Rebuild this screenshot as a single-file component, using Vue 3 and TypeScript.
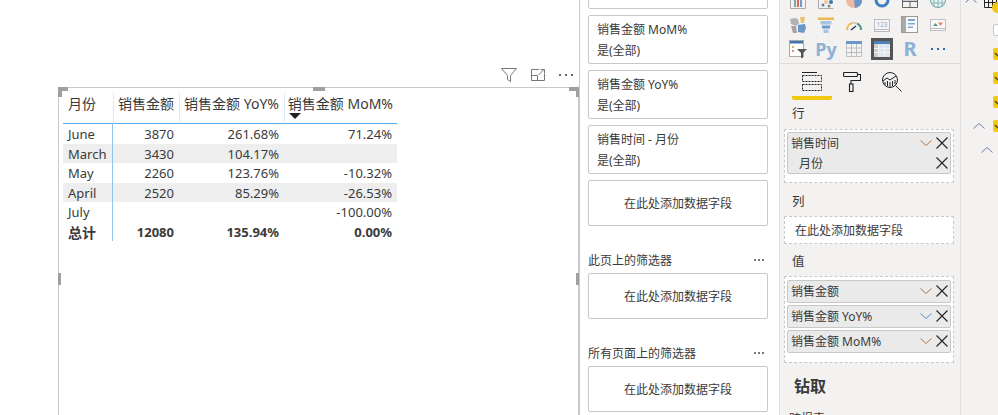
<script setup lang="ts">
interface Row { name: string; amount: string; yoy: string; mom: string; striped: boolean }
const rows: Row[] = [
  { name: 'June', amount: '3870', yoy: '261.68%', mom: '71.24%', striped: false },
  { name: 'March', amount: '3430', yoy: '104.17%', mom: '', striped: true },
  { name: 'May', amount: '2260', yoy: '123.76%', mom: '-10.32%', striped: false },
  { name: 'April', amount: '2520', yoy: '85.29%', mom: '-26.53%', striped: true },
  { name: 'July', amount: '', yoy: '', mom: '-100.00%', striped: false }
]
const filters = ['销售金额 MoM%', '销售金额 YoY%', '销售时间 - 月份']
const values = ['销售金额', '销售金额 YoY%', '销售金额 MoM%']
const checks = [0, 1, 2, 3]
</script>

<template>
  <div class="app">
    <section class="canvas">
      <div class="toolbar">
        <svg width="16" height="14" viewBox="0 0 16 14" fill="none" stroke="#7b7480"><path d="M.5.500h15L9.500 7.500v6l-3-2v-4z" /></svg>
        <svg width="14" height="12" viewBox="0 0 14 12" fill="none" stroke="#7b7480"><path d="M8 .5H.5v11h13V5M.5 6.500h6v5M7.500 6l5.500-5.500M9.500.500h4v4" /></svg>
        <span class="dots dark"><i></i><i></i><i></i></span>
      </div>
      <div class="visual">
        <span class="handle tl"></span>
        <span class="handle tm"></span>
        <span class="handle tr"></span>
        <span class="handle ml"></span>
        <span class="handle mr"></span>
        <div class="table">
          <div class="cell head left">月份</div>
          <div class="cell head">销售金额</div>
          <div class="cell head">销售金额 YoY%</div>
          <div class="cell head sorted">销售金额 MoM%<span class="arrow"></span></div>
          <template v-for="r in rows" :key="r.name">
            <div class="cell first" :class="{ striped: r.striped }">{{ r.name }}</div>
            <div class="cell num" :class="{ striped: r.striped }">{{ r.amount }}</div>
            <div class="cell num" :class="{ striped: r.striped }">{{ r.yoy }}</div>
            <div class="cell num" :class="{ striped: r.striped }">{{ r.mom }}</div>
          </template>
          <div class="cell first total label">总计</div>
          <div class="cell num total">12080</div>
          <div class="cell num total">135.94%</div>
          <div class="cell num total">0.00%</div>
        </div>
      </div>
    </section>

    <section class="filters">
      <div class="card cut"></div>
      <div v-for="f in filters" :key="f" class="card filter">
        <div>{{ f }}</div>
        <div>是(全部)</div>
      </div>
      <div class="card add tall">在此处添加数据字段</div>
      <div class="group-head"><span>此页上的筛选器</span><span class="dots small"><i></i><i></i><i></i></span></div>
      <div class="card add">在此处添加数据字段</div>
      <div class="group-head"><span>所有页面上的筛选器</span><span class="dots small"><i></i><i></i><i></i></span></div>
      <div class="card add">在此处添加数据字段</div>
    </section>

    <section class="viz">
      <div class="gallery">
        <svg viewBox="0 0 18 18" class="ico"><path d="M1.500 0v17.500h15V0" fill="none" stroke="#aaa" /><path d="M5 16V9h2v7z" fill="#7fa9a0" /><path d="M8 16V5h2v11z" fill="#d9695a" /><path d="M11 16V8h2v8z" fill="#6a9bd1" /></svg>
        <svg viewBox="0 0 18 18" class="ico"><path d="M1.500 0v17.500h15" fill="none" stroke="#aaa" /><circle cx="6" cy="14" r="1.500" fill="#4f7fb5" /><circle cx="9" cy="11" r="2" fill="#e8c88d" /><circle cx="14" cy="11" r="2" fill="#3f74ad" /><circle cx="12" cy="15" r="1.500" fill="#888" /></svg>
        <svg viewBox="0 0 18 18" class="ico"><circle cx="9" cy="9" r="8" fill="#eeb8a2" /><path d="M16 5a8 8 0 0 1-6 12l-1-8z" fill="#6a96c8" /></svg>
        <svg viewBox="0 0 18 18" class="ico"><circle cx="9" cy="9" r="6" fill="none" stroke="#3f7fbf" stroke-width="3" /></svg>
        <svg viewBox="0 0 18 18" class="ico"><path d="M1.500 0v16.500h15V0M1.500 10.500h15M9 6v10.500" fill="none" stroke="#666" /><path d="M2 6h14v4H2z" fill="#c3d3e6" /></svg>
        <svg viewBox="0 0 18 18" class="ico"><circle cx="9" cy="9" r="7.500" fill="#e4eef0" stroke="#6aa6a0" /><path d="M2 7h14M3 12h12M9 1v16M5 2v14M13 2v14" stroke="#6aa6a0" fill="none" stroke-width=".7" /></svg>

        <svg viewBox="0 0 18 18" class="ico"><path d="M1 3l5-1 3 1 1 5-3 2-5-2z" fill="#b3b3b3" /><path d="M2 10l5 0 1 7-4 0z" fill="#a3a3a3" /><path d="M9 9l7-1 1 4-2 5-6-1z" fill="#6a96c8" /><path d="M11 1h5l-1 6-3 0z" fill="#e8b54d" opacity=".8" /></svg>
        <svg viewBox="0 0 18 18" class="ico"><path d="M1 1.500h16v2.500H1z" fill="#efb94d" /><path d="M3.500 5h11v3.500h-11z" fill="#a9c4e0" /><path d="M5 9.500h8v3H5z" fill="#6e9bcb" /><path d="M6.500 13.500h5V17h-5z" fill="#a9c4e0" /></svg>
        <svg viewBox="0 0 18 18" class="ico"><path d="M2 14a7 7 0 0 1 5.500-7" fill="none" stroke="#efb94d" stroke-width="2" /><path d="M7.500 7a7 7 0 0 1 4 .3" fill="none" stroke="#e0c9a0" stroke-width="2" /><path d="M12 7.500a7 7 0 0 1 4 6.500" fill="none" stroke="#4f9a8a" stroke-width="2" /><path d="M6 14l5-4" stroke="#333" stroke-width="1.500" fill="none" /></svg>
        <svg viewBox="0 0 18 18" class="ico"><rect x="1.500" y="3.500" width="15" height="12" fill="#f5f5f5" stroke="#bbb" /><path d="M2 13.500h14" stroke="#bbb" fill="none" /><text x="9" y="11" class="mini">123</text></svg>
        <svg viewBox="0 0 18 18" class="ico"><rect x=".5" y=".5" width="16" height="16" fill="#fafafa" stroke="#999" /><path d="M1 1h4v15H1z" fill="#aaa" /><path d="M7 3h7v2H7zM7 7h7v1.500H7zM7 10.500h5V12H7z" fill="#7ea6d1" /></svg>
        <svg viewBox="0 0 18 18" class="ico"><rect x="1.500" y="3.500" width="15" height="11" fill="#f9f9f9" stroke="#c0c0c0" /><path d="M4 10l2.500-3L9 10z" fill="#4f9a8a" /><path d="M9 6.500h5l-2.500 3.500z" fill="#e8806a" /><path d="M2 12.500h14" stroke="#bbb" fill="none" /></svg>

        <svg viewBox="0 0 18 18" class="ico"><rect x=".5" y=".5" width="14" height="16" fill="#fff" stroke="#aaa" /><path d="M1 1h13v2.500H1z" fill="#3f74ad" /><path d="M3 6h2v2H3z" fill="#e8b54d" /><path d="M3 10h2v2H3z" fill="#e88a6a" /><path d="M8 9h10l-4 4v5h-2v-5z" fill="#555" /></svg>
        <span class="lang py">Py</span>
        <svg viewBox="0 0 18 18" class="ico"><path d="M1.500 1.500h15v15h-15z" fill="#f3f3f3" stroke="#c0c0c0" /><path d="M1 1h16v3H1z" fill="#6a96c8" /><path d="M1.500 8h15M1.500 12.500h15M6.500 4v12M11.500 4v12" stroke="#bbb" fill="none" /></svg>
        <span class="selected"><svg viewBox="0 0 16 16" width="16" height="16"><path d="M0 0h16v16H0z" fill="#dbe6f1" /><path d="M0 0h16v3H0z" fill="#4f7fb5" /><path d="M0 3h4.500v13H0z" fill="#cfcfcf" /><path d="M0 7.500h16M0 11.500h16M4.500 3v13M10.500 3v13" stroke="#f3f3f3" fill="none" /></svg></span>
        <span class="lang r">R</span>
        <span class="dots blue"><i></i><i></i><i></i></span>
      </div>

      <div class="tabs">
        <div class="tab active">
          <svg viewBox="0 0 20 19" width="20" height="19" fill="none" stroke="#222"><path d="M0 .5h15" /><path d="M.5 3.500h19v6H.5zM.5 12.500h19v6H.5z" stroke-dasharray="2 1" /></svg>
        </div>
        <div class="tab">
          <svg viewBox="0 0 18 20" width="18" height="20" fill="none" stroke="#222" stroke-width="1.100"><rect x=".5" y=".5" width="14" height="4" rx="1" /><path d="M14.500 2.500h3v6H8v3.500" /><rect x="6.500" y="12" width="3.500" height="7.500" /></svg>
        </div>
        <div class="tab">
          <svg viewBox="0 0 20 20" width="20" height="20" fill="none" stroke="#222" stroke-width="1"><circle cx="8" cy="8" r="7.500" /><path d="M1 9l4-3 3 2 6-4M3 10v3M5.500 9v5M8 10v5M10.500 9v5M13 8v4" /><path d="M13.500 13.500l6 6" /></svg>
        </div>
      </div>

      <div class="section-label row-label">行</div>
      <div class="well rows-well">
        <div class="chip double">
          <div class="chip-line">
            <span>销售时间</span>
            <svg class="chev" viewBox="0 0 12 6"><path d="M.5.500l5.500 5 5.500-5" fill="none" stroke="#a8764a" /></svg>
            <svg class="close" viewBox="0 0 12 12"><path d="M.5.500l11 11M11.500.500l-11 11" stroke="#222" stroke-width="1.100" /></svg>
          </div>
          <div class="chip-line sub">
            <span>月份</span>
            <svg class="close" viewBox="0 0 12 12"><path d="M.5.500l11 11M11.500.500l-11 11" stroke="#222" stroke-width="1.100" /></svg>
          </div>
        </div>
      </div>

      <div class="section-label col-label">列</div>
      <div class="well empty">在此处添加数据字段</div>

      <div class="section-label val-label">值</div>
      <div class="well values">
        <div v-for="(v, i) in values" :key="v" class="chip">
          <div class="chip-line">
            <span>{{ v }}</span>
            <svg class="chev" viewBox="0 0 12 6"><path d="M.5.500l5.500 5 5.500-5" fill="none" :stroke="i === 1 ? '#4a8fd0' : '#a8764a'" /></svg>
            <svg class="close" viewBox="0 0 12 12"><path d="M.5.500l11 11M11.500.500l-11 11" stroke="#222" stroke-width="1.100" /></svg>
          </div>
        </div>
      </div>

      <div class="drill">钻取</div>
      <div class="cross">跨报表</div>
    </section>

    <section class="fields">
      <div class="field-top">
        <svg class="up" viewBox="0 0 12 6"><path d="M.5 5.500L6 .5l5.500 5" fill="none" stroke="#6b7fa8" /></svg>
        <svg class="grid-ico" viewBox="0 0 13 8"><path d="M.5 0v7.500h12V0M.5 2.500h12M4.500 0v7.500M8.500 0v7.500" fill="none" stroke="#222" /></svg>
        <span class="badge"></span>
      </div>
      <span class="box"></span>
      <span v-for="c in checks" :key="c" class="check"><svg viewBox="0 0 8 8" width="8" height="8"><path d="M1 3l3 3 4-3" fill="none" stroke="#333" stroke-width="1.200" /></svg></span>
      <svg class="up a" viewBox="0 0 12 6"><path d="M.5 5.500L6 .5l5.500 5" fill="none" stroke="#6b7fa8" /></svg>
      <svg class="up b" viewBox="0 0 12 6"><path d="M.5 5.500L6 .5l5.500 5" fill="none" stroke="#6b7fa8" /></svg>
    </section>
  </div>
</template>

<style>
html, body { margin: 0; background: #fff; }
</style>

<style scoped>
.app {
  display: flex;
  width: 998px;
  height: 415px;
  overflow: hidden;
  font: 12px/19px "Noto Sans", "Noto Sans CJK SC", sans-serif;
  color: #3a3a3a;
  background: #fff;
}
.canvas {
  width: 579px;
  flex: none;
  padding: 68px 0 0 58px;
  box-sizing: border-box;
}
.toolbar {
  height: 14px;
  margin-bottom: 5px;
  display: flex;
  align-items: center;
  justify-content: flex-end;
  gap: 14px;
  padding-right: 6px;
}
.dots { display: inline-flex; gap: 4px; }
.dots i { width: 2px; height: 2px; background: #777; }
.dots.dark i { background: #666; }
.dots.blue i { background: #33689c; }
.dots.small { gap: 2px; margin-right: 4px; }
.visual {
  position: relative;
  height: 340px;
  border: 1px solid #c8c8c8;
  border-bottom: 0;
  padding: 5px 0 0 4px;
}
.handle { position: absolute; background: #a0a0a0; }
.handle.tl, .handle.tr { width: 10px; height: 10px; top: -1px; background: none; border: 0 solid #a0a0a0; border-top-width: 4px; box-sizing: border-box; }
.handle.tl { left: -1px; border-left-width: 4px; }
.handle.tr { right: -1px; border-right-width: 3px; }
.handle.tm { width: 12px; height: 4px; top: -1px; left: 254px; }
.handle.ml, .handle.mr { width: 3px; height: 12px; top: 185px; }
.handle.ml { left: -1px; }
.handle.mr { right: -1px; }
.table {
  display: grid;
  grid-template-columns: 50px 66px 105px 113px;
  grid-template-rows: 31px repeat(6, 19.5px);
  width: 334px;
  font-size: 13px;
}
.cell {
  padding: 1px 5px 0;
  text-align: right;
  white-space: nowrap;
  line-height: 19.500px;
}
.head {
  position: relative;
  font-size: 14px;
  line-height: 22px;
  border-bottom: 1px solid #5aa7e6;
  border-left: 1px solid #dcebfa;
  padding: 0 5px 0 0;
  box-sizing: border-box;
}
.head.sorted { padding-right: 4px; }
.head.left { text-align: left; padding-left: 5px; border-left: 0; }
.arrow {
  position: absolute;
  left: 4px;
  top: 20px;
  border: 6px solid transparent;
  border-top: 6px solid #222;
  border-bottom: 0;
}
.first { text-align: left; border-right: 1px solid #8fc5f5; }
.striped { background: #eeeeee; }
.total { font-weight: 700; }
.total.label { font-size: 14px; }

.filters {
  width: 201px;
  flex: none;
  box-sizing: border-box;
  border-left: 1px solid #c8c8c8;
  border-right: 1px solid #e1dfdd;
  padding: 0 11px 0 8px;
  display: flex;
  flex-direction: column;
}
.card {
  border: 1px solid #c8c8c8;
  border-radius: 2px;
  box-sizing: border-box;
  flex: none;
}
.card.cut { height: 10px; margin-top: -1px; }
.filter {
  height: 49px;
  margin-top: 6px;
  padding: 3px 8px 0 8px;
  line-height: 21px;
}
.add {
  height: 46px;
  display: flex;
  align-items: center;
  justify-content: center;
}
.add.tall { margin-top: 6px; }
.group-head {
  display: flex;
  justify-content: space-between;
  align-items: center;
  height: 20px;
  margin-top: 24px;
  margin-bottom: 3px;
}

.viz {
  width: 181px;
  flex: none;
  box-sizing: border-box;
  background: #f3f2f1;
  border-right: 1px solid #e1dfdd;
}
.gallery {
  display: grid;
  grid-template-columns: repeat(6, 28px);
  grid-auto-rows: 24.500px;
  margin: -12px 0 0 4px;
  justify-items: center;
  align-items: center;
  height: 75px;
}
.ico { width: 18px; height: 18px; overflow: hidden; }
.mini { font-size: 6.500px; text-anchor: middle; fill: #7ea6d1; }
.lang { font-family: "Noto Sans", sans-serif; font-weight: 700; color: #8db0d6; }
.py { font-size: 18px; line-height: 22px; }
.r { font-size: 20px; line-height: 22px; }
.selected {
  width: 22px;
  height: 22px;
  box-sizing: border-box;
  border: 3px solid #555;
  display: flex;
  align-items: center;
  justify-content: center;
}
.tabs {
  border-top: 1px solid #dcdbda;
  display: flex;
  height: 41px;
  padding: 8px 0 0 12px;
  box-sizing: border-box;
}
.tab { width: 40px; display: flex; justify-content: center; height: 29px; box-sizing: border-box; }
.tab.active { height: 28px; border-bottom: 4px solid #f2c811; border-radius: 2px; }
.section-label {
  margin-left: 12px;
  font-size: 12.500px;
  line-height: 20px;
}
.row-label { margin-bottom: 5px; }
.col-label { margin-top: 9px; margin-bottom: 4px; }
.val-label { margin-top: 8px; margin-bottom: 4px; }
.well {
  margin-left: 4px;
  width: 170px;
  box-sizing: border-box;
  border: 1px dashed #c8c8c8;
  background: #fff;
  padding: 2px;
  border-radius: 1px;
}
.rows-well { height: 54px; }
.well.empty {
  height: 28px;
  padding: 4px 0 0 10px;
}
.values { display: flex; flex-direction: column; gap: 2px; height: 87px; padding-top: 3px; }
.chip {
  box-sizing: border-box;
  border: 1px solid #c8c8c8;
  border-radius: 2px;
  background: #ebeaea;
  height: 23px;
}
.chip.double { height: 42px; }
.chip-line {
  height: 20px;
  display: flex;
  align-items: center;
  padding-left: 3px;
}
.chip-line span { flex: 1; white-space: nowrap; }
.chip-line.sub { padding-left: 11px; }
.chev { width: 12px; height: 6px; margin-right: 4px; }
.close { width: 12px; height: 12px; margin-right: 2px; }
.drill {
  margin: 12px 0 0 14px;
  font-size: 16px;
  font-weight: 700;
  line-height: 22px;
}
.cross { margin: 12px 0 0 9px; line-height: 20px; }

.fields {
  width: 37px;
  flex: none;
  background: #f3f2f1;
  box-sizing: border-box;
  padding-left: 32px;
  display: flex;
  flex-direction: column;
  position: relative;
}
.field-top { height: 24px; position: relative; margin-left: -32px; }
.up { width: 12px; height: 6px; display: block; }
.field-top .up { position: absolute; left: 4px; top: -3px; }
.grid-ico { position: absolute; left: 23px; top: 0; width: 13px; height: 8px; }
.badge { position: absolute; left: 31px; top: 2px; width: 11px; height: 11px; border-radius: 50%; background: #f2c811; }
.box { width: 12px; height: 12px; border: 1px solid #c8c8c8; background: #fff; box-sizing: border-box; border-radius: 2px; flex: none; }
.check {
  width: 12px;
  height: 12px;
  flex: none;
  background: #f2c811;
  border-radius: 2px;
  margin-top: 12px;
  display: flex;
  align-items: center;
  padding-left: 1px;
  box-sizing: border-box;
}
.up.a { position: absolute; left: 12px; top: 123px; }
.up.b { position: absolute; left: 20px; top: 147px; }
</style>
